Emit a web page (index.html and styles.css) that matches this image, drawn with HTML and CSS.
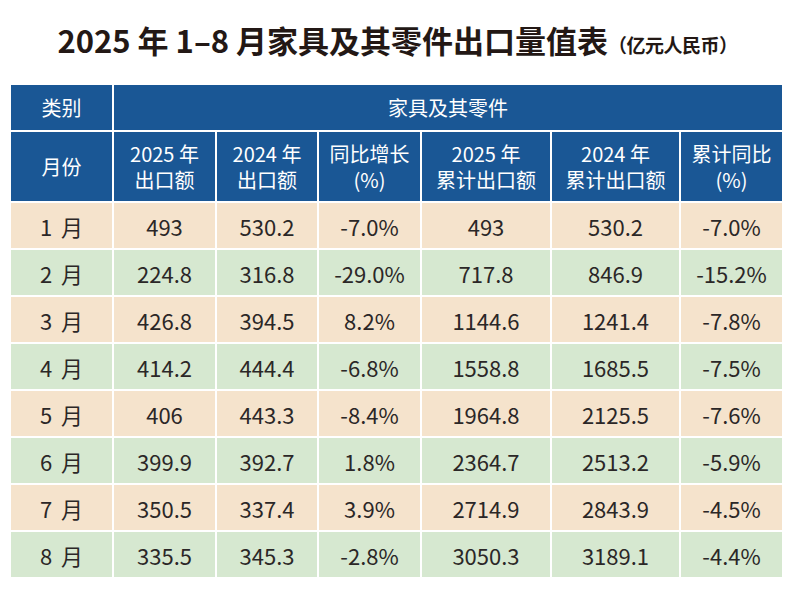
FILE: index.html
```html
<!DOCTYPE html>
<html lang="zh-CN">
<head>
<meta charset="utf-8">
<title>2025 年 1–8 月家具及其零件出口量值表</title>
<link rel="stylesheet" href="styles.css">
</head>
<body>
<h1 class="title">2025 年 1–8 月家具及其零件出口量值表<span class="unit">（亿元人民币）</span></h1>
<table class="data">
  <colgroup>
    <col class="c1"><col class="c2"><col class="c3"><col class="c4"><col class="c5"><col class="c6"><col class="c7">
  </colgroup>
  <thead>
    <tr class="h1row">
      <th>类别</th>
      <th colspan="6">家具及其零件</th>
    </tr>
    <tr class="h2row">
      <th>月份</th>
      <th><span class="ln">2025 年</span><span class="ln">出口额</span></th>
      <th><span class="ln">2024 年</span><span class="ln">出口额</span></th>
      <th><span class="ln">同比增长</span><span class="ln">(%)</span></th>
      <th><span class="ln">2025 年</span><span class="ln">累计出口额</span></th>
      <th><span class="ln">2024 年</span><span class="ln">累计出口额</span></th>
      <th><span class="ln">累计同比</span><span class="ln">(%)</span></th>
    </tr>
  </thead>
  <tbody>
    <tr class="odd"><td class="m">1 月</td><td>493</td><td>530.2</td><td>-7.0%</td><td>493</td><td>530.2</td><td>-7.0%</td></tr>
    <tr class="even"><td class="m">2 月</td><td>224.8</td><td>316.8</td><td>-29.0%</td><td>717.8</td><td>846.9</td><td>-15.2%</td></tr>
    <tr class="odd"><td class="m">3 月</td><td>426.8</td><td>394.5</td><td>8.2%</td><td>1144.6</td><td>1241.4</td><td>-7.8%</td></tr>
    <tr class="even"><td class="m">4 月</td><td>414.2</td><td>444.4</td><td>-6.8%</td><td>1558.8</td><td>1685.5</td><td>-7.5%</td></tr>
    <tr class="odd"><td class="m">5 月</td><td>406</td><td>443.3</td><td>-8.4%</td><td>1964.8</td><td>2125.5</td><td>-7.6%</td></tr>
    <tr class="even"><td class="m">6 月</td><td>399.9</td><td>392.7</td><td>1.8%</td><td>2364.7</td><td>2513.2</td><td>-5.9%</td></tr>
    <tr class="odd"><td class="m">7 月</td><td>350.5</td><td>337.4</td><td>3.9%</td><td>2714.9</td><td>2843.9</td><td>-4.5%</td></tr>
    <tr class="even"><td class="m">8 月</td><td>335.5</td><td>345.3</td><td>-2.8%</td><td>3050.3</td><td>3189.1</td><td>-4.4%</td></tr>
  </tbody>
</table>
</body>
</html>
```
FILE: styles.css
```css
html, body {
  margin: 0;
  padding: 0;
  background: #ffffff;
}
body {
  font-family: "Noto Sans CJK SC", "Noto Sans", sans-serif;
  color: #2a2626;
}
.title {
  margin: 0;
  padding-top: 22px;
  padding-left: 2px;
  height: 36px;
  line-height: 36px;
  text-align: center;
  font-size: 31px;
  font-weight: 700;
  color: #231815;
}
.unit {
  font-size: 19px;
  font-weight: 700;
  letter-spacing: -0.5px;
}
.data {
  margin: 25px 0 0 9px;
  border-collapse: separate;
  border-spacing: 2px;
  table-layout: fixed;
  width: 775px;
}
.c1 { width: 101px; }
.c2 { width: 101px; }
.c3 { width: 100px; }
.c4 { width: 101px; }
.c5 { width: 128px; }
.c6 { width: 127px; }
.c7 { width: 101px; }
.data th,
.data td {
  padding: 0;
  text-align: center;
  vertical-align: middle;
}
.data th {
  background: #1a5795;
  color: #ffffff;
  font-weight: 400;
  font-size: 20px;
  line-height: 26px;
}
.ln {
  display: block;
  height: 26px;
}
.h1row th { height: 45px; }
.h2row th { height: 69px; }
.data td {
  height: 45px;
  font-size: 22px;
  line-height: 26px;
  color: #2b2727;
}
.data td.m { word-spacing: 4px; }
.odd td { background: #f5e3cc; }
.even td { background: #d6e8d0; }
```
